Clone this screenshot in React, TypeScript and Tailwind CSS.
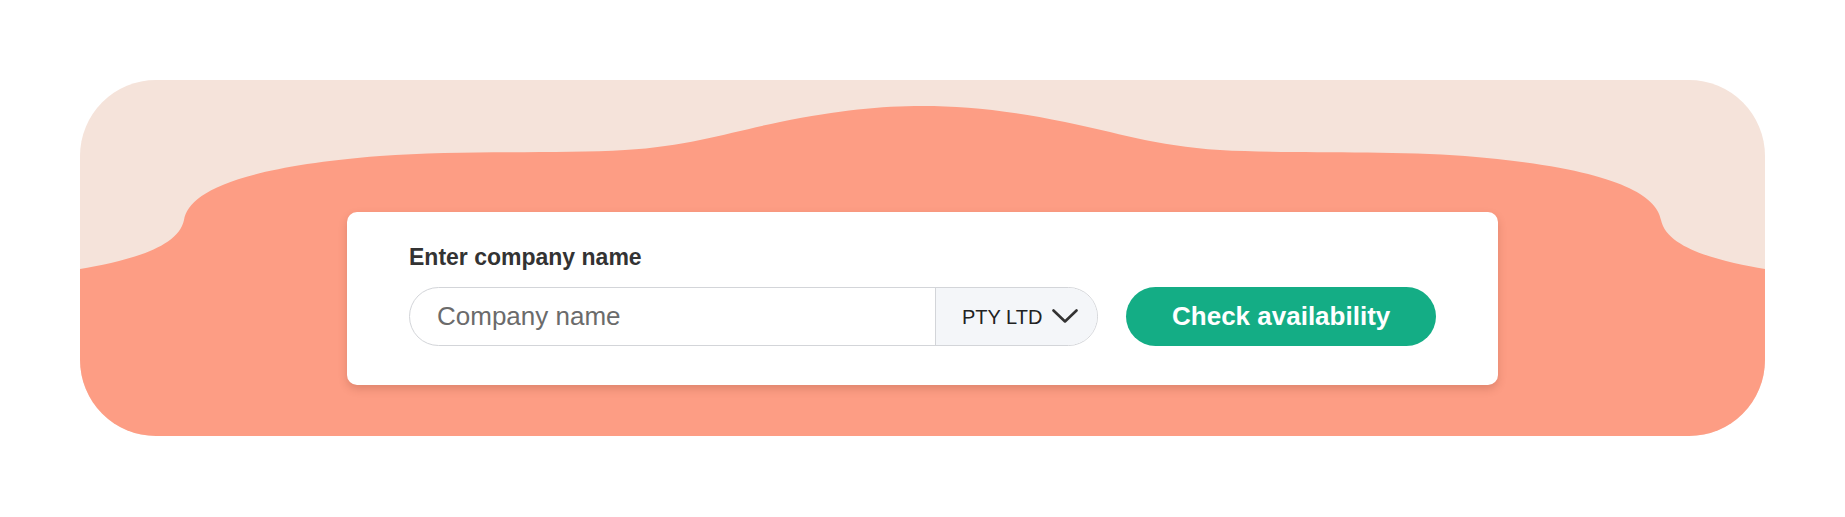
import React, { useState } from 'react'

const suffixes = ['PTY LTD', 'LTD', 'PTY']

const WaveBackdrop: React.FC = () => (
  <svg
    className="absolute inset-0 h-full w-full"
    viewBox="0 0 1685 356"
    preserveAspectRatio="none"
    aria-hidden="true"
  >
    <path
      fill="#fd9d84"
      d="M0,189 C40,182 98,170 104,140 C108,115 150,88 300,76 C380,70 480,74 545,70 C610,66 650,52 700,42 C760,30 800,26 842.5,26 C885,26 925,30 985,42 C1035,52 1075,66 1140,70 C1205,74 1305,70 1385,76 C1535,88 1577,115 1581,140 C1587,170 1645,182 1685,189 L1685,356 L0,356 Z"
    />
  </svg>
)

const App: React.FC = () => {
  const [name, setName] = useState('')
  const [suffix] = useState(suffixes[0])

  return (
    <div className="min-h-[517px] bg-white px-[80px] pt-[80px] font-['Liberation_Sans',Arial,sans-serif]">
      <div className="relative h-[356px] w-[1685px] overflow-hidden rounded-[76px] bg-[#f5e3da]">
        <WaveBackdrop />

        <div className="relative flex justify-center pt-[132px]">
          {/* Search card */}
          <div className="w-[1151px] rounded-[10px] bg-white px-[62px] pt-[33px] pb-[39px] shadow-[0_4px_8px_rgba(120,50,30,0.22)]">
            <label className="block text-[23px] leading-[24px] font-bold text-[#333333]">
              Enter company name
            </label>

            <div className="mt-[18px] flex items-center gap-[28px]">
              <div className="flex h-[59px] w-[690px] overflow-hidden rounded-full border border-[#d3d5d9] bg-white">
                <input
                  value={name}
                  onChange={e => setName(e.target.value)}
                  placeholder="Company name"
                  className="w-[525px] bg-transparent pl-[27px] text-[26px] text-[#333] outline-none placeholder:text-[#6b6b6b]"
                />
                <button className="flex flex-1 items-center border-l border-[#d3d5d9] bg-[#f4f6f9] pl-[26px] text-[20px] text-[#222222]">
                  <span>{suffix}</span>
                  <svg className="ml-[10px]" width="26" height="15" viewBox="0 0 26 15" fill="none">
                    <path d="M1.5 1.5 L13 12.5 L24.5 1.5" stroke="#333333" strokeWidth="2.6" strokeLinecap="round" strokeLinejoin="round" />
                  </svg>
                </button>
              </div>

              <button className="h-[59px] w-[310px] rounded-full bg-[#14ad85] text-[26px] font-bold text-white">
                Check availability
              </button>
            </div>
          </div>
        </div>
      </div>
    </div>
  )
}

export default App
